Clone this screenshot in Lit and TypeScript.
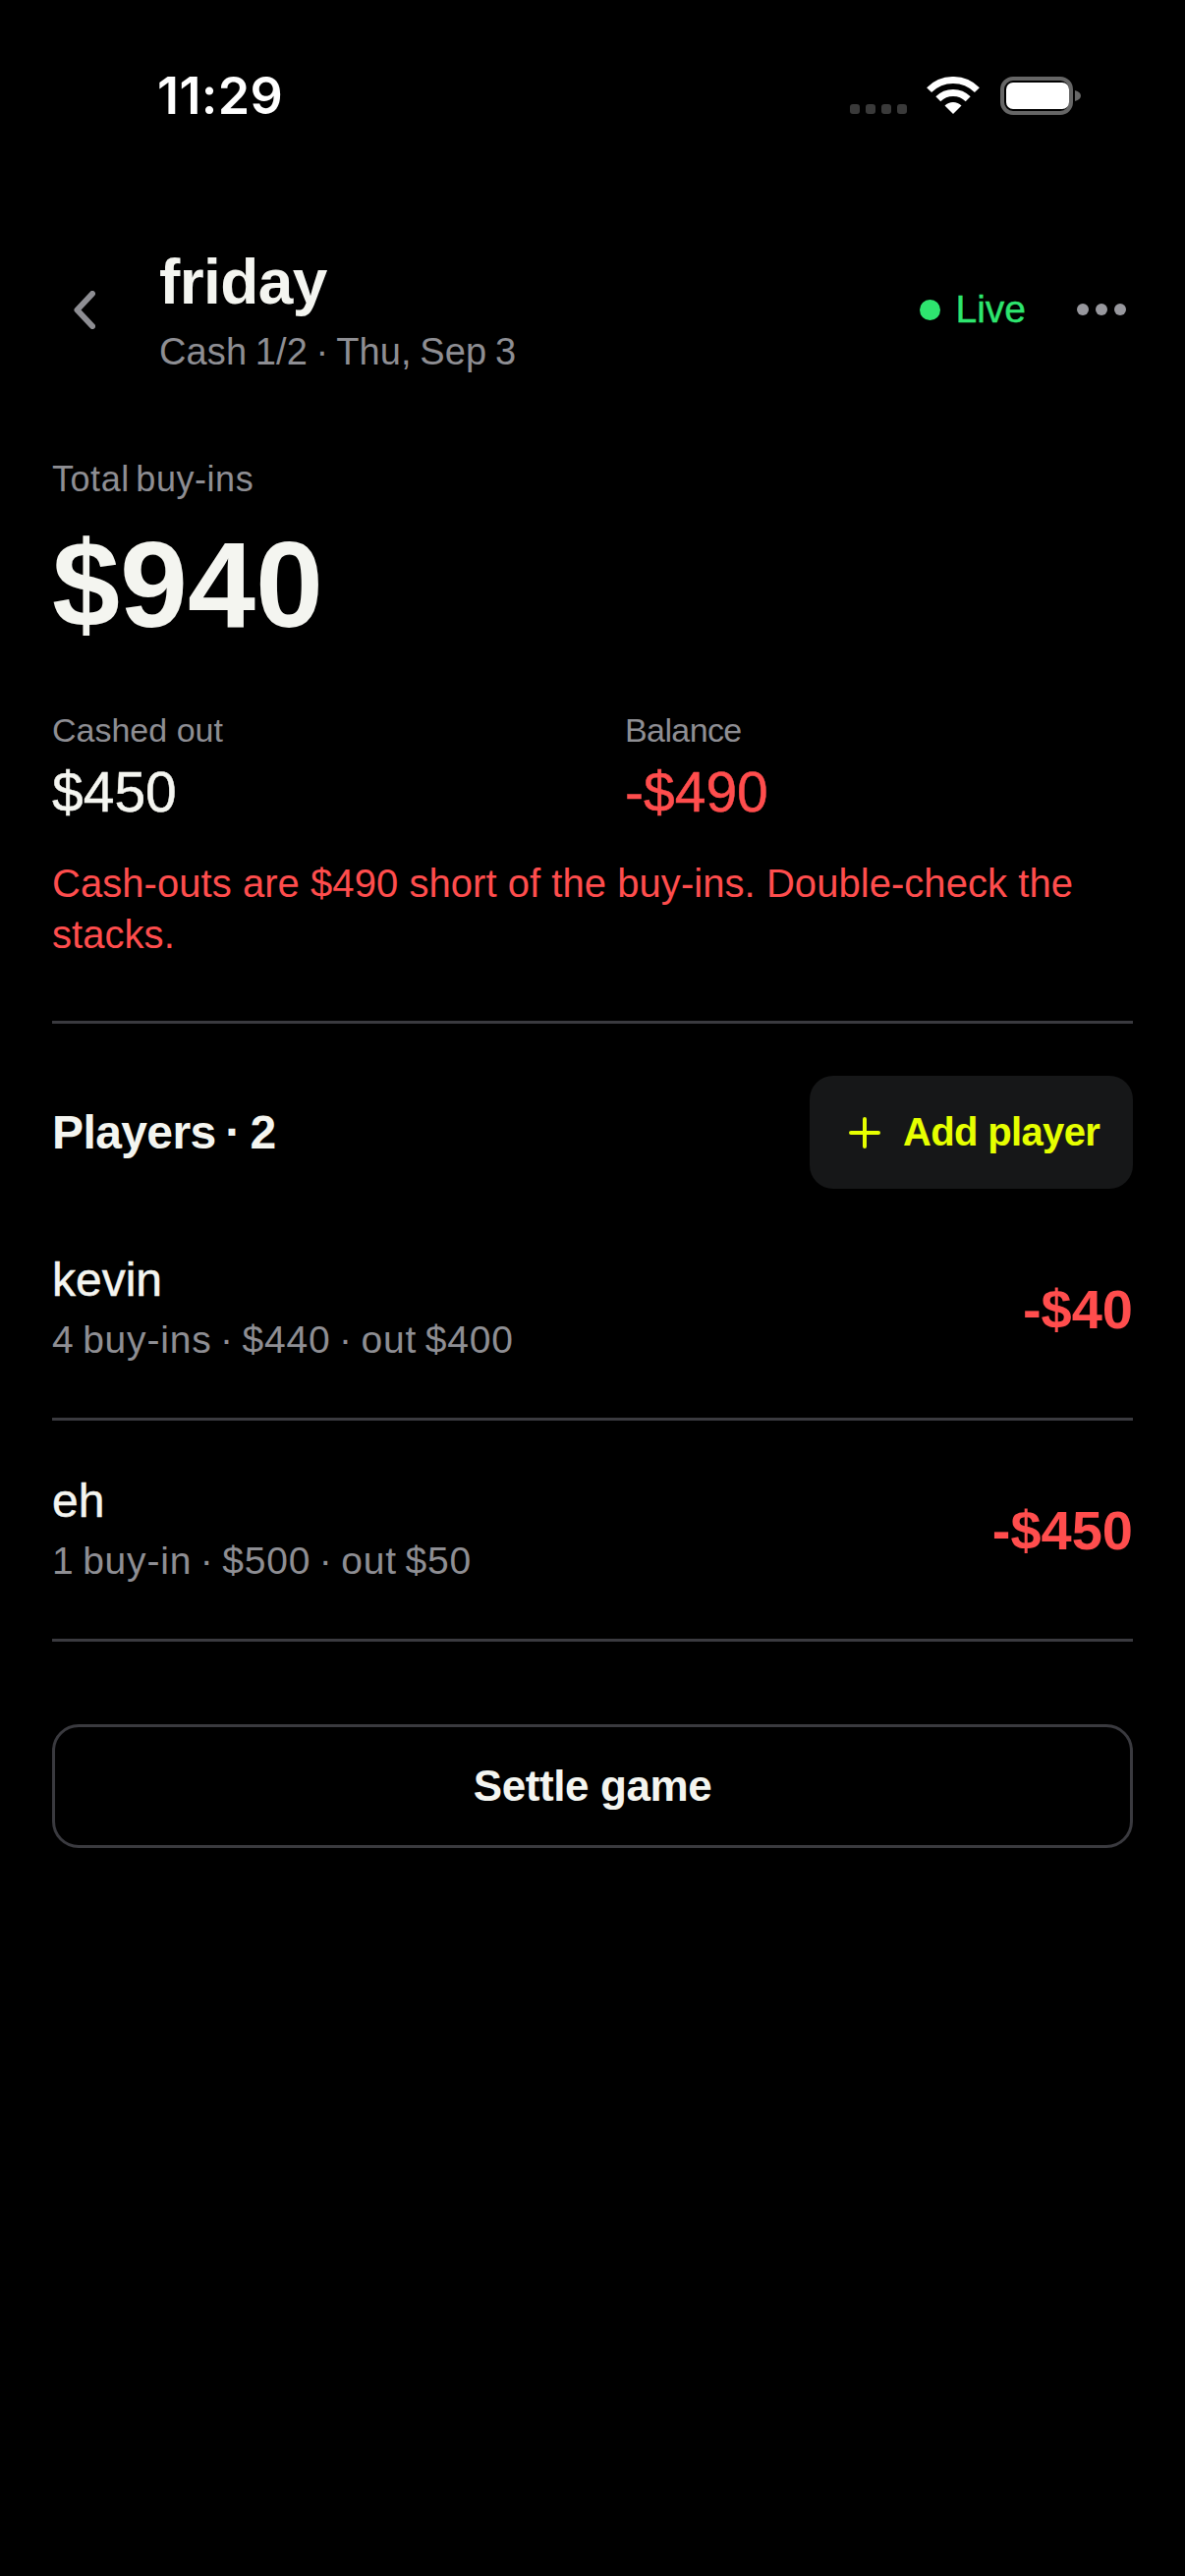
import { LitElement, html, css } from "lit";
import { customElement } from "lit/decorators.js";

const players = [
  { name: "kevin", detail: "4 buy-ins · $440 · out $400", net: "-$40" },
  { name: "eh", detail: "1 buy-in · $500 · out $50", net: "-$450" },
];

@customElement("app-root")
export class AppRoot extends LitElement {
  static styles = css`
    :host { display: block; width: 1206px; min-height: 2622px; background: #000; color: #f4f5f0; font-family: "Liberation Sans", Arial, sans-serif; }
    * { box-sizing: border-box; }
    .status { height: 126px; padding: 70px 105px 0 160px; display: flex; justify-content: space-between; align-items: flex-start; }
    .time { font-family: Inter, sans-serif; font-weight: 600; font-size: 52px; line-height: 56px; color: #fff; letter-spacing: 0.4px; }
    .status svg { display: block; margin-top: 8px; }
    .header { display: flex; align-items: center; padding: 0 60px 0 0; margin-top: 124px; height: 130px; }
    .back { width: 162px; padding-left: 75px; flex: none; display: flex; }
    .title { font-size: 64px; line-height: 72px; font-weight: 700; letter-spacing: -0.6px; }
    .sub { font-size: 38px; line-height: 44px; color: #8e8e93; letter-spacing: 0.1px; word-spacing: -2px; margin-top: 13px; }
    .titles { flex: 1; }
    .live { display: flex; align-items: center; gap: 15px; color: #2ee56f; font-size: 39px; font-weight: 400; -webkit-text-stroke: 0.4px currentColor; }
    .dot { width: 21px; height: 21px; border-radius: 50%; background: #2ee56f; }
    .more { display: flex; gap: 7px; margin-left: 52px; }
    .more i { width: 12px; height: 12px; border-radius: 50%; background: #98989e; display: block; }
    .main { padding: 0 53px; }
    .label { font-size: 34px; line-height: 42px; color: #8e8e93; }
    .label.total-label { font-size: 36px; letter-spacing: 0.55px; word-spacing: -4px; margin-top: 87px; }
    .label.bal { letter-spacing: -0.6px; }
    .total { font-size: 124px; line-height: 136px; font-weight: 700; letter-spacing: 0; margin-top: 18px; }
    .stats { display: grid; grid-template-columns: 583px 1fr; margin-top: 59px; }
    .val { font-size: 57px; line-height: 66px; margin-top: 9px; -webkit-text-stroke: 0.5px currentColor; }
    .neg { color: #ff4d4d; }
    .warn { color: #ff4d4d; font-size: 40px; line-height: 52px; margin: 34px 0 0; letter-spacing: 0.05px; }
    .rule { height: 3px; background: #3a3a3f; }
    .warn + .rule { margin-top: 62px; }
    .players-head { display: flex; justify-content: space-between; align-items: center; margin-top: 53px; margin-bottom: 11px; }
    .players-title { font-size: 48px; font-weight: 700; letter-spacing: -0.6px; word-spacing: -3px; }
    .add { width: 329px; height: 115px; border-radius: 24px; background: #161718; color: #e6ff00; display: flex; align-items: center; padding-left: 40px; gap: 23px; font-size: 40px; font-weight: 700; letter-spacing: -0.65px; }
    .add svg { display: block; flex: none; }
    .row { display: flex; justify-content: space-between; align-items: center; height: 225px; border-bottom: 3px solid #3a3a3f; }
    .name { font-size: 48px; line-height: 56px; -webkit-text-stroke: 0.5px currentColor; }
    .detail { font-size: 39px; line-height: 50px; color: #8e8e93; margin-top: 8px; letter-spacing: 0.8px; word-spacing: -3px; }
    .net { font-size: 56px; font-weight: 700; color: #ff4d4d; }
    .settle { margin-top: 84px; height: 126px; border: 3px solid #3a3a3f; border-radius: 27px; display: flex; align-items: center; justify-content: center; font-size: 44px; font-weight: 700; letter-spacing: -0.4px; }
  `;

  render() {
    return html`
      <div class="status">
        <div class="time">11:29</div>
        <svg width="236" height="40" viewBox="0 0 236 40">
          <g fill="#3a3a3a"><rect x="0" y="28" width="10" height="10" rx="3"/><rect x="16" y="28" width="10" height="10" rx="3"/><rect x="32" y="28" width="10" height="10" rx="3"/><rect x="48" y="28" width="10" height="10" rx="3"/></g>
          <g fill="none" stroke="#fff" stroke-width="7">
            <path d="M80.600 13.600 A34.500 34.500 0 0 1 129.400 13.600"/>
            <path d="M89.800 22.800 A21.500 21.500 0 0 1 120.200 22.800"/>
          </g>
          <path d="M105 38 L96.500 29.500 A12 12 0 0 1 113.500 29.500 Z" fill="#fff"/>
          <rect x="155" y="2" width="70" height="35" rx="11" fill="none" stroke="#666" stroke-width="4"/>
          <rect x="159" y="6" width="64" height="27" rx="7" fill="#fff"/>
          <path d="M229 14 C233 15 235 17 235 19.500 C235 22 233 24 229 25 Z" fill="#666"/>
        </svg>
      </div>
      <div class="header">
        <div class="back">
          <svg width="22" height="39" viewBox="0 0 22 39"><path d="M19 3 L3.500 19.500 L19 36" fill="none" stroke="#8e8e93" stroke-width="6" stroke-linecap="round" stroke-linejoin="round"/></svg>
        </div>
        <div class="titles">
          <div class="title">friday</div>
          <div class="sub">Cash 1/2 · Thu, Sep 3</div>
        </div>
        <div class="live"><span class="dot"></span>Live</div>
        <div class="more"><i></i><i></i><i></i></div>
      </div>
      <div class="main">
        <div class="label total-label">Total buy-ins</div>
        <div class="total">$940</div>
        <div class="stats">
          <div><div class="label">Cashed out</div><div class="val">$450</div></div>
          <div><div class="label bal">Balance</div><div class="val neg">-$490</div></div>
        </div>
        <p class="warn">Cash-outs are $490 short of the buy-ins. Double-check the stacks.</p>
        <div class="rule"></div>
        <div class="players-head">
          <div class="players-title">Players · 2</div>
          <div class="add">
            <svg width="32" height="32" viewBox="0 0 32 32"><path d="M16 2 V30 M2 16 H30" stroke="#e6ff00" stroke-width="4" stroke-linecap="round"/></svg>
            <span>Add player</span>
          </div>
        </div>
        ${players.map((p) => html`
          <div class="row">
            <div><div class="name">${p.name}</div><div class="detail">${p.detail}</div></div>
            <div class="net">${p.net}</div>
          </div>`)}
        <div class="settle">Settle game</div>
      </div>
    `;
  }
}
